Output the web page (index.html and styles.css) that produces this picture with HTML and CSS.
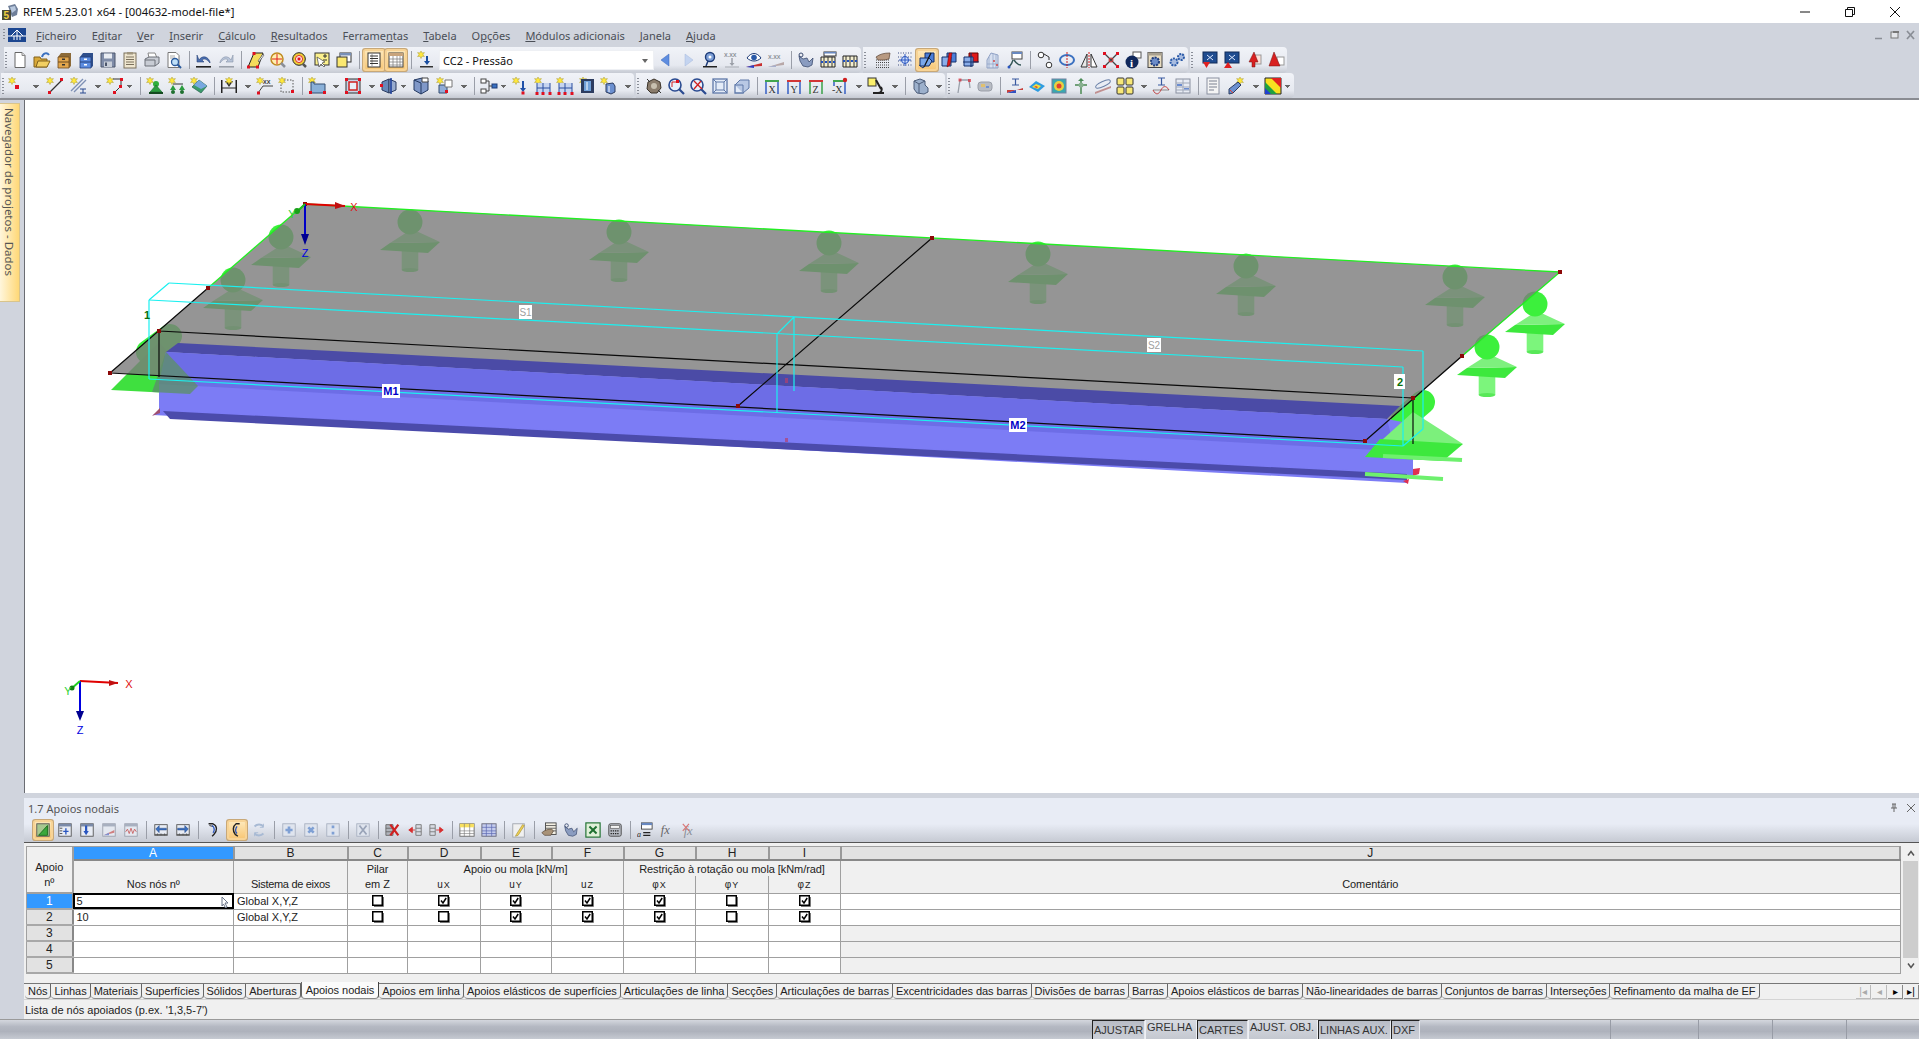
FILE: index.html
```html
<!DOCTYPE html>
<html lang="pt">

<head>
  <meta charset="UTF-8">
  <title>RFEM 5.23.01 x64 - [004632-model-file*]</title>
  <link rel="stylesheet" href="styles.css">
</head>

<body>
  <!-- icon sheet -->
  <svg class="defs">
    <defs>
      <g id="st"><path d="M4 0l1 2 2.400-.4L6 3.600l1.400 2L5 5.200 4 7.500l-1-2.300-2.400.4L2 3.600.6 1.600 3 2z" fill="#ffe83c" stroke="#a89a30" stroke-width=".5"/></g>
      <g id="rd"><rect width="3" height="3" fill="#e01020"/></g>
    </defs>
    <symbol id="new" viewBox="0 0 18 18"><path d="M4 1.500h7l3 3v12H4z" fill="#fff" stroke="#666"/><path d="M11 1.500v3h3" fill="#ddd" stroke="#888"/></symbol>
    <symbol id="open" viewBox="0 0 18 18"><path d="M1 6h6l1 2h6v8H1z" fill="#d8a838" stroke="#80601c"/><path d="M3 16l2-6h12l-3 6z" fill="#f2cf62" stroke="#80601c"/><path d="M9 6c1-4 5-5 7-2" fill="none" stroke="#3a70c0" stroke-width="2"/></symbol>
    <symbol id="arco" viewBox="0 0 18 18"><path d="M6 2h10v13l-2 2H3V6z" fill="#8c6a38"/><path d="M3 6h11v11H3z" fill="#e2a64c" stroke="#6c4a1e" stroke-width=".8"/><path d="M3 11h11" stroke="#6c4a1e"/><rect x="7" y="7.500" width="3" height="1.500" fill="#333"/><rect x="7" y="13" width="3" height="1.500" fill="#333"/></symbol>
    <symbol id="arcb" viewBox="0 0 18 18"><path d="M6 2h10v13l-2 2H3V6z" fill="#2f4f8c"/><path d="M3 6h11v11H3z" fill="#5c8ce0" stroke="#23407c" stroke-width=".8"/><path d="M3 11h11" stroke="#23407c"/><rect x="7" y="7.500" width="3" height="1.500" fill="#fff"/><rect x="7" y="13" width="3" height="1.500" fill="#fff"/></symbol>
    <symbol id="save" viewBox="0 0 18 18"><path d="M2 2h14v14H2z" fill="#7f8ca8" stroke="#4c566c"/><rect x="5" y="2.500" width="8" height="5" fill="#e8ecf2"/><rect x="5" y="10.500" width="8" height="5.500" fill="#c8ced8"/><rect x="6" y="11.500" width="2" height="3.500" fill="#4c566c"/></symbol>
    <symbol id="note" viewBox="0 0 18 18"><rect x="3" y="2" width="12" height="15" fill="#efe6cf" stroke="#7a705c"/><path d="M5 6h8M5 8.500h8M5 11h8M5 13.500h8" stroke="#7a705c"/><rect x="6" y="1" width="6" height="2.500" fill="#a09680"/></symbol>
    <symbol id="print" viewBox="0 0 18 18"><path d="M5 2h7l2 5H6z" fill="#fff" stroke="#888"/><path d="M2 8l4-2h10v6l-4 3H2z" fill="#c8ccd4" stroke="#6c7078"/><path d="M2 9h10v6" fill="none" stroke="#6c7078"/></symbol>
    <symbol id="prev" viewBox="0 0 18 18"><path d="M3 1.500h8l3 3v12H3z" fill="#fff" stroke="#777"/><path d="M5 5h5M5 7h5" stroke="#aaa"/><circle cx="10" cy="11" r="3.500" fill="#bfe0f8" stroke="#2a5a9c" stroke-width="1.300"/><path d="M12.500 13.500l3.500 3.500" stroke="#2a5a9c" stroke-width="2"/></symbol>
    <symbol id="undo" viewBox="0 0 18 18"><path d="M4 9c3-5 9-4 11 2v1c-3-4-6-5-8-3l2 2H2V4z" fill="#4a6eb0" stroke="#2a4478" stroke-width=".6"/><rect x="1" y="15" width="15" height="1.600" fill="#222"/></symbol>
    <symbol id="redo" viewBox="0 0 18 18"><path d="M14 9c-3-5-9-4-11 2v1c3-4 6-5 8-3l-2 2h7V4z" fill="#b8c4d8" stroke="#8894aa" stroke-width=".6"/><rect x="2" y="15" width="15" height="1.600" fill="#9aa0aa"/></symbol>
    <symbol id="para" viewBox="0 0 18 18"><path d="M7 2h9l-5 14H1z" fill="#f4dc5c" stroke="#222"/><use href="#rd" x="5.500" y="1"/><use href="#rd" y="14.500"/><use href="#rd" x="9" y="14.500"/><path d="M11 10l5-7 1 1-5 7z" fill="#fff" stroke="#333" stroke-width=".6"/></symbol>
    <symbol id="lens1" viewBox="0 0 18 18"><circle cx="8" cy="8" r="6" fill="#fff0b0" stroke="#c08a20" stroke-width="1.500"/><path d="M8 3v10M3 8h10" stroke="#e02020"/><path d="M12 12l4 4" stroke="#8a8f98" stroke-width="2.500"/></symbol>
    <symbol id="lens2" viewBox="0 0 18 18"><circle cx="8" cy="8" r="6.300" fill="#f0d038" stroke="#222"/><circle cx="8" cy="8" r="3.500" fill="#fff" stroke="#e02020"/><use href="#rd" x="6.500" y="6.500"/><path d="M12 13l3 3" stroke="#555" stroke-width="2.500"/></symbol>
    <symbol id="winc" viewBox="0 0 18 18"><rect x="2" y="2" width="14" height="12" fill="#fbf08c" stroke="#333"/><path d="M10 5h4M12 3v4M10 9h4" stroke="#333"/><path d="M4 6l2 10 2-3 3 3 1-1-3-3 3-1z" fill="#fff" stroke="#444" stroke-width=".7"/></symbol>
    <symbol id="winy" viewBox="0 0 18 18"><rect x="5" y="2" width="11" height="9" fill="#fff" stroke="#333"/><rect x="5" y="2" width="11" height="2.500" fill="#7890b8"/><rect x="2" y="6" width="10" height="10" fill="#fbe870" stroke="#333"/></symbol>
    <symbol id="tb1" viewBox="0 0 18 18"><rect x="3" y="2" width="12" height="14" fill="#fff" stroke="#333"/><path d="M5 5h8M5 7.500h8M5 10h8M5 12.500h8" stroke="#333"/><path d="M7 3v12" stroke="#333" stroke-width=".5"/></symbol>
    <symbol id="tb2" viewBox="0 0 18 18"><rect x="2" y="2" width="14" height="14" fill="#fff" stroke="#444"/><rect x="2" y="2" width="14" height="3" fill="#c8a47c"/><path d="M2 8h14M2 11h14M2 14h14M6 5v11M10 5v11M13 5v11" stroke="#777" stroke-width=".7"/></symbol>
    <symbol id="loadc" viewBox="0 0 18 18"><use href="#st"/><path d="M10 5v7" stroke="#1a4ea0" stroke-width="2"/><path d="M7 10h6l-3 4z" fill="#1a4ea0"/><rect x="3" y="15" width="13" height="1.500" fill="#333"/></symbol>
    <symbol id="left" viewBox="0 0 18 18"><path d="M12 3v12L4 9z" fill="#5e8de0" stroke="#3a66b8" stroke-width=".5"/></symbol>
    <symbol id="right" viewBox="0 0 18 18"><path d="M6 3v12l8-6z" fill="#c4d4f0" stroke="#a4b8dc" stroke-width=".5"/></symbol>
    <symbol id="viewp" viewBox="0 0 18 18"><circle cx="9" cy="6" r="4.500" fill="#7ea0d8" stroke="#1e3c78" stroke-width="1.400"/><circle cx="9" cy="6" r="1.500" fill="#fff"/><path d="M7 10l-2 5" stroke="#1e3c78" stroke-width="1.500"/><rect x="2" y="15" width="14" height="1.500" fill="#222"/></symbol>
    <symbol id="xxd" viewBox="0 0 18 18"><text x="1" y="6" class="ict" fill="#8a8e96">X.XX</text><path d="M9 7v7" stroke="#9ca0a8" stroke-width="1.500"/><path d="M6.500 12h5L9 15z" fill="#9ca0a8"/><rect x="2" y="15.500" width="14" height="1" fill="#a8acb4"/></symbol>
    <symbol id="eye" viewBox="0 0 18 18"><path d="M2 7c4-6 10-6 14 0-4 4-10 4-14 0z" fill="#fff" stroke="#1e3c78"/><circle cx="9" cy="6.500" r="2.800" fill="#2a5aa8"/><path d="M1 16l16-4v3z" fill="#c83030"/><path d="M1 16l8-2v3z" fill="#3040c0"/></symbol>
    <symbol id="xxg" viewBox="0 0 18 18"><text x="1" y="8" class="ict" fill="#8a8e96">X.XX</text><path d="M1 16l16-5v3z" fill="#b8a8a8"/><path d="M1 16l8-2v2z" fill="#a8b0cc"/></symbol>
    <symbol id="wren" viewBox="0 0 18 18"><path d="M2 5l4 3 4-1 2 4 4-4-1 7-4 2-5-1-3-5z" fill="#8a9cc0" stroke="#3c4c70" stroke-width=".8"/><circle cx="4" cy="4" r="2" fill="none" stroke="#3c4c70"/></symbol>
    <symbol id="aba1" viewBox="0 0 18 18"><rect x="5" y="1" width="12" height="4" fill="#fff" stroke="#333"/><rect x="5" y="1" width="12" height="1.500" fill="#6888c0"/><path d="M2 6h14v10H2z" fill="#f4efd0" stroke="#222"/><path d="M5 6v10M9 6v10M13 6v10" stroke="#333"/><path d="M2 11h14" stroke="#2050c0" stroke-width="2" stroke-dasharray="2 2"/></symbol>
    <symbol id="aba2" viewBox="0 0 18 18"><path d="M2 5h14v11H2z" fill="#f4efd0" stroke="#222"/><path d="M5 5v11M9 5v11M13 5v11" stroke="#333"/><path d="M2 10h14" stroke="#2050c0" stroke-width="2" stroke-dasharray="2 2"/></symbol>
    <symbol id="hand" viewBox="0 0 18 18"><path d="M2 9h14M2 11.500h14M2 14h14M2 16.500h14" stroke="#444" stroke-dasharray="1 1"/><path d="M2 6c4-3 8-4 14-4l-1 6-5 1H4z" fill="#b89a82" stroke="#5a4434" stroke-width=".7"/></symbol>
    <symbol id="gstar" viewBox="0 0 18 18"><path d="M2 2h14M2 6h14M2 10h14M2 14h14" stroke="#3c4c80" stroke-dasharray="1 1.500"/><circle cx="9" cy="9" r="3.500" fill="#cfe0ff" stroke="#2a56c0"/><path d="M9 3v12M3 9h12" stroke="#2a56c0"/></symbol>
    <symbol id="cub" viewBox="0 0 18 18"><path d="M7 2h9v9H7z" fill="#4c7ed8" stroke="#14306c"/><path d="M2 7h9l3 3-3 5H2z" fill="#7aa8ec" stroke="#14306c"/><path d="M13 2l-7 14" stroke="#111" stroke-width="1.200"/><path d="M1 14l4 3 2-3" fill="none" stroke="#1b3c80"/></symbol>
    <symbol id="cubr" viewBox="0 0 18 18"><path d="M7 2h9v9H7z" fill="#4c7ed8" stroke="#14306c"/><path d="M2 6h9v9H2z" fill="#8aaeea" stroke="#14306c"/><path d="M9 2l-2 14 3-2 2-12z" fill="#e01818" stroke="#600" stroke-width=".5"/></symbol>
    <symbol id="cubr2" viewBox="0 0 18 18"><path d="M7 2h9v9H7z" fill="#e01818" stroke="#600"/><path d="M2 6h9v9H2z" fill="#8aaeea" stroke="#14306c"/><path d="M9 2v14" stroke="#14306c" stroke-width="1.200"/><path d="M1 11h16" stroke="#14306c"/></symbol>
    <symbol id="fgrid" viewBox="0 0 18 18"><path d="M7 2l7 2v13H3V9z" fill="#d8e0f0" stroke="#8ea0c4"/><path d="M3 13h11M5 6v11M9 3v14M12 4v13" stroke="#8ea0c4" stroke-width=".7"/><circle cx="10" cy="10" r="1" fill="#d04848"/><circle cx="13" cy="14" r="1" fill="#d04848"/></symbol>
    <symbol id="bran" viewBox="0 0 18 18"><rect x="6" y="1" width="10" height="7" fill="#fff" stroke="#444"/><rect x="6" y="1" width="10" height="2" fill="#6888c0"/><path d="M7 9c-1 4-2 5-4 7M8 9c2 3 4 5 7 5" fill="none" stroke="#355" stroke-width="1.400"/><circle cx="3" cy="16" r="1.500" fill="#2a56c0"/></symbol>
    <symbol id="chain" viewBox="0 0 18 18"><circle cx="5" cy="4" r="2.800" fill="#fff" stroke="#333"/><circle cx="13" cy="14" r="2.800" fill="#fff" stroke="#333"/><path d="M8 3l5 3v3" fill="none" stroke="#333"/></symbol>
    <symbol id="cdash" viewBox="0 0 18 18"><ellipse cx="9" cy="9" rx="7" ry="5" fill="none" stroke="#3a70c0" stroke-width="2"/><path d="M9 1v16" stroke="#d02020" stroke-dasharray="2 1"/></symbol>
    <symbol id="mirr" viewBox="0 0 18 18"><path d="M7 3v13H1z" fill="#e8e8e8" stroke="#333"/><path d="M11 3v13h6z" fill="#fff" stroke="#333"/><path d="M9 1v16" stroke="#d02020" stroke-dasharray="2 1"/></symbol>
    <symbol id="xred" viewBox="0 0 18 18"><path d="M3 3l12 12M15 3L3 15" stroke="#444" stroke-width="1.300"/><use href="#rd" x="1" y="1"/><use href="#rd" x="14" y="1"/><use href="#rd" x="1" y="14"/><use href="#rd" x="14" y="14"/><circle cx="9" cy="9" r="2" fill="none" stroke="#d02020"/></symbol>
    <symbol id="info" viewBox="0 0 18 18"><rect x="9" y="1" width="8" height="6" fill="#fff" stroke="#555"/><circle cx="8" cy="11" r="6.500" fill="#10285c"/><text x="6" y="15.500" class="ici" fill="#fff">i</text></symbol>
    <symbol id="gwin" viewBox="0 0 18 18"><rect x="2" y="1.500" width="14" height="15" fill="#e8dcc0" stroke="#444"/><rect x="2" y="1.500" width="14" height="3" fill="#a8a090"/><circle cx="9" cy="10.500" r="4" fill="#6c8cc8" stroke="#1f3c7c" stroke-width="2" stroke-dasharray="2 1"/></symbol>
    <symbol id="gear" viewBox="0 0 18 18"><circle cx="6" cy="11" r="3.500" fill="#a8bce0" stroke="#2a5aa8" stroke-width="2" stroke-dasharray="2 1"/><circle cx="13" cy="6" r="3" fill="#a8bce0" stroke="#2a5aa8" stroke-width="2" stroke-dasharray="2 1"/></symbol>
    <symbol id="shdn" viewBox="0 0 18 18"><rect x="2" y="1" width="14" height="11" fill="#1f4c90" stroke="#102a58"/><path d="M6 4l6 5M12 4L6 9" stroke="#dde8ff"/><path d="M2 11h7l-3.500 6z" fill="#e02020"/></symbol>
    <symbol id="shup" viewBox="0 0 18 18"><rect x="2" y="1" width="14" height="11" fill="#1f4c90" stroke="#102a58"/><path d="M6 4l6 5M12 4L6 9" stroke="#dde8ff"/><path d="M1 17h8L5 11z" fill="#e02020"/></symbol>
    <symbol id="rarr" viewBox="0 0 18 18"><rect x="9" y="4" width="7" height="9" fill="#fde0d8" stroke="#999"/><path d="M9 1l-5 10h3v5h3v-5h3z" fill="#d82020" stroke="#701010" stroke-width=".5"/></symbol>
    <symbol id="rarr2" viewBox="0 0 18 18"><rect x="10" y="6" width="7" height="8" fill="#fff" stroke="#999"/><path d="M7 1L2 15h11z" fill="#d82020" stroke="#701010" stroke-width=".5"/></symbol>
    <symbol id="pt" viewBox="0 0 18 18"><use href="#st"/><rect x="7" y="8" width="4" height="4" fill="#e01020"/></symbol>
    <symbol id="line" viewBox="0 0 18 18"><use href="#st"/><path d="M16 3L4 15" stroke="#333" stroke-width="1.300"/><use href="#rd" x="14" y="1"/><use href="#rd" x="2" y="14"/></symbol>
    <symbol id="bari" viewBox="0 0 18 18"><use href="#st"/><path d="M13 2L1 14M16 3L4 15" stroke="#7e90b4" stroke-width="1.400"/><path d="M10 12h6M13 12v4M10 16h6" stroke="#2a4a90"/></symbol>
    <symbol id="poly" viewBox="0 0 18 18"><use href="#st"/><path d="M7 2h8v7l-7 7" fill="none" stroke="#333"/><use href="#rd" x="14" y="1"/><use href="#rd" x="13" y="8"/><use href="#rd" x="7" y="14"/></symbol>
    <symbol id="supg" viewBox="0 0 18 18"><use href="#st"/><circle cx="10" cy="7" r="3" fill="#2fae3c"/><path d="M10 8l6 7H4z" fill="#2c9c40" stroke="#14602a" stroke-width=".5"/><rect x="3" y="15" width="14" height="2" fill="#144a20"/></symbol>
    <symbol id="sup2" viewBox="0 0 18 18"><use href="#st"/><path d="M5 7h10" stroke="#333"/><path d="M5 8l3 5H2zM14 8l3 5h-6z" fill="#2c9c40"/><circle cx="5" cy="15" r="2" fill="#1e7030"/><circle cx="14" cy="15" r="2" fill="#1e7030"/></symbol>
    <symbol id="surg" viewBox="0 0 18 18"><use href="#st"/><path d="M9 3l8 6-6 7-9-6z" fill="#3c9c6c" stroke="#14503c" stroke-width=".6"/><path d="M9 3l8 6-6 3-7-4z" fill="#78a8e0"/></symbol>
    <symbol id="dimx" viewBox="0 0 18 18"><rect x="1" y="3" width="1.500" height="13" fill="#222"/><rect x="15.500" y="3" width="1.500" height="13" fill="#222"/><path d="M2 11h14" stroke="#222"/><path d="M5 4h8L9 10z" fill="#333"/><use href="#st" x="5"/></symbol>
    <symbol id="xxl" viewBox="0 0 18 18"><use href="#st"/><text x="7" y="7" class="ict" fill="#333">XX</text><path d="M2 16l5-7h10" fill="none" stroke="#444"/><use href="#rd" x="1" y="14.500"/></symbol>
    <symbol id="dash" viewBox="0 0 18 18"><rect x="3" y="3" width="12" height="12" fill="none" stroke="#555" stroke-dasharray="1.500 1.500"/><use href="#st"/><use href="#rd" x="13" y="13"/></symbol>
    <symbol id="rblu" viewBox="0 0 18 18"><use href="#st"/><path d="M3 5h3v2h11v9H3z" fill="#8ab0d8" stroke="#334c70"/><use href="#rd" x="1" y="14"/><use href="#rd" x="15" y="14"/></symbol>
    <symbol id="rred" viewBox="0 0 18 18"><rect x="2" y="2" width="14" height="14" fill="#c8d4e8" stroke="#333"/><rect x="5" y="5" width="8" height="8" fill="#e8eef8" stroke="#d02020" stroke-width="1.500"/><use href="#rd" x="1" y="1"/><use href="#rd" x="14" y="14"/><use href="#rd" x="14" y="1"/><use href="#rd" x="1" y="14"/></symbol>
    <symbol id="cuar" viewBox="0 0 18 18"><path d="M2 5l7-3v14l-7-3z" fill="#6888b8" stroke="#2c3c60"/><path d="M9 2l7 3v8l-7 3z" fill="#98acd0" stroke="#2c3c60"/><path d="M11 1v16" stroke="#1a3c98" stroke-width="1.500"/><use href="#rd" x="0" y="7"/></symbol>
    <symbol id="cubl" viewBox="0 0 18 18"><path d="M2 3l8-2 6 3v9l-7 4-7-4z" fill="#8098c8" stroke="#223860"/><path d="M10 1h6v4h-6z" fill="#fff" stroke="#444"/><path d="M2 3l7 3v11" fill="none" stroke="#223860"/></symbol>
    <symbol id="cubs" viewBox="0 0 18 18"><use href="#st"/><path d="M3 8h8v8H3z" fill="#90acd8" stroke="#334c70"/><path d="M9 3h7v7H9z" fill="#fff" stroke="#777"/><use href="#rd" x="9" y="13"/></symbol>
    <symbol id="flow" viewBox="0 0 18 18"><rect x="1" y="2" width="5" height="4" fill="#fff" stroke="#444"/><rect x="1" y="12" width="5" height="4" fill="#fff" stroke="#444"/><rect x="12" y="7" width="5" height="4" fill="#3a70c0" stroke="#1e3c78"/><path d="M6 4h3v5h3M6 14h3V9" fill="none" stroke="#444"/></symbol>
    <symbol id="dred" viewBox="0 0 18 18"><use href="#st"/><path d="M11 4v8" stroke="#2050a8" stroke-width="2"/><path d="M8 11h6l-3 4z" fill="#2050a8"/><use href="#rd" x="9.500" y="14.500"/></symbol>
    <symbol id="frm" viewBox="0 0 18 18"><use href="#st"/><path d="M3 6h13v11H3z" fill="#c6d4f0"/><path d="M3 11h13M3 6v11M9 6v11M16 6v11" stroke="#2a4ea0"/><use href="#rd" x="1.500" y="15"/><use href="#rd" x="7.500" y="15"/><use href="#rd" x="14.500" y="15"/></symbol>
    <symbol id="film" viewBox="0 0 18 18"><use href="#st" x="1"/><rect x="3" y="2" width="13" height="14" fill="#2c3c60"/><rect x="6" y="4" width="7" height="10" fill="#70a0d8"/><path d="M9 5v8" stroke="#fff"/></symbol>
    <symbol id="bhand" viewBox="0 0 18 18"><use href="#st"/><path d="M6 7l7-1 2 3v6l-4 2-5-2z" fill="#6c90d0" stroke="#2c3c60"/><path d="M9 9v6" stroke="#fff"/></symbol>
    <symbol id="gskel" viewBox="0 0 18 18"><path d="M3 5l6-3 6 3 1 6-4 5H6l-4-4z" fill="#8a7c6c" stroke="#3a3228"/><circle cx="9" cy="9" r="3" fill="#c8c0b0"/><path d="M2 2l3 3M16 16l-3-3" stroke="#333"/></symbol>
    <symbol id="zred" viewBox="0 0 18 18"><circle cx="8" cy="8" r="6" fill="#e8f0fc" stroke="#2a4a90" stroke-width="1.600"/><path d="M12 12l5 5" stroke="#2a4a90" stroke-width="2.200"/><path d="M5 10V5h5" fill="none" stroke="#d02020"/><use href="#rd" x="9" y="3"/></symbol>
    <symbol id="zx" viewBox="0 0 18 18"><circle cx="8" cy="8" r="6" fill="#e8f0fc" stroke="#2a4a90" stroke-width="1.600"/><path d="M12 12l5 5" stroke="#2a4a90" stroke-width="2.200"/><path d="M5 4l8 8M12 4l-7 8" stroke="#d02020" stroke-width="1.300"/></symbol>
    <symbol id="wire" viewBox="0 0 18 18"><rect x="2" y="2" width="14" height="14" fill="#e4ecf8" stroke="#5e78a8" stroke-width="1.300"/><rect x="5" y="5" width="8" height="8" fill="none" stroke="#5e78a8"/><path d="M2 2l3 3M16 2l-3 3M2 16l3-3M16 16l-3-3" stroke="#5e78a8"/></symbol>
    <symbol id="wcub" viewBox="0 0 18 18"><path d="M2 8h8v8H2z" fill="#e4ecf8" stroke="#5e78a8" stroke-width="1.300"/><path d="M2 8l5-5h9v8l-6 5" fill="#b8c8e4" stroke="#5e78a8"/><path d="M2 8h8v8" fill="none" stroke="#5e78a8"/></symbol>
    <symbol id="axx" viewBox="0 0 18 18"><path d="M2 4h14" stroke="#2e9c3c" stroke-width="1.800"/><path d="M3 5v12M15 5v12" stroke="#2a56c0" stroke-width="1.400"/><text x="5.500" y="16" class="ics" fill="#333">X</text></symbol>
    <symbol id="axy" viewBox="0 0 18 18"><path d="M2 4h14" stroke="#d02020" stroke-width="1.800"/><path d="M3 5v12M15 5v12" stroke="#2a56c0" stroke-width="1.400"/><text x="5.500" y="16" class="ics" fill="#333">Y</text></symbol>
    <symbol id="axz" viewBox="0 0 18 18"><path d="M2 4h14" stroke="#d02020" stroke-width="1.800"/><path d="M3 5v12M15 5v12" stroke="#2e9c3c" stroke-width="1.400"/><text x="5.500" y="16" class="ics" fill="#333">Z</text></symbol>
    <symbol id="axm" viewBox="0 0 18 18"><path d="M2 4h12" stroke="#2e9c3c" stroke-width="1.800"/><path d="M14 5v12M3 5v4" stroke="#2a56c0" stroke-width="1.400"/><text x="1" y="16" class="ics" fill="#333">-X</text><circle cx="14" cy="3" r="2.200" fill="#d02020"/></symbol>
    <symbol id="micr" viewBox="0 0 18 18"><rect x="1" y="1" width="8" height="8" fill="#fbf06c" stroke="#333"/><path d="M9 3l5 9M6 16h11M11 16c3 0 5-3 3-6" fill="none" stroke="#222" stroke-width="2"/></symbol>
    <symbol id="shap" viewBox="0 0 18 18"><path d="M3 4l6-2 5 2v4l3 3v4l-4 2-7-1-3-4z" fill="#9cb0cc" stroke="#4c5c78"/><path d="M3 4l5 3v9M8 7l6-3" fill="none" stroke="#4c5c78"/></symbol>
    <symbol id="pf" viewBox="0 0 18 18"><path d="M4 16L6 3h9l1 8" fill="none" stroke="#9aa0aa" stroke-width="1.300"/><use href="#rd" x="4.500" y="1.500" opacity=".6"/><use href="#rd" x="14" y="2" opacity=".6"/></symbol>
    <symbol id="chip" viewBox="0 0 18 18"><rect x="2" y="5" width="14" height="9" rx="3" fill="#b8bcc4" stroke="#9a9ea8"/><rect x="5" y="7" width="4" height="3" fill="#e0c070"/><rect x="10" y="9" width="3" height="2" fill="#7090d0"/></symbol>
    <symbol id="bgr" viewBox="0 0 18 18"><path d="M6 2h7M9.500 2v6M6 8h7" stroke="#3a5aa0" stroke-width="1.200"/><path d="M1 16l16-5v2H1z" fill="#c8403c"/><path d="M1 16l9-3v3z" fill="#3050c0"/></symbol>
    <symbol id="heat" viewBox="0 0 18 18"><path d="M1 10l7-6 9 5-7 6z" fill="#2e9ce0"/><path d="M4 10l4-3 5 2-3 3z" fill="#f0e040"/><path d="M6 10l2-1 2 1-1 1z" fill="#e04030"/></symbol>
    <symbol id="chea" viewBox="0 0 18 18"><rect x="2" y="2" width="14" height="14" fill="#3aa8b0" stroke="#7080a0"/><circle cx="9" cy="9" r="5" fill="#e8d040"/><circle cx="9" cy="9" r="2.500" fill="#e04030"/></symbol>
    <symbol id="arws" viewBox="0 0 18 18"><path d="M9 2v7M3 8h12M9 9v8" stroke="#70a078" stroke-width="2"/><path d="M6 4l3-3 3 3z" fill="#4c8c58"/><circle cx="9" cy="8" r="2.500" fill="#88b090"/></symbol>
    <symbol id="elli" viewBox="0 0 18 18"><path d="M1 15l16-6v2L1 17z" fill="#c09090"/><ellipse cx="9" cy="7" rx="8" ry="2.500" transform="rotate(-25 9 7)" fill="#e8ecf4" stroke="#6a80a8"/></symbol>
    <symbol id="sq4" viewBox="0 0 18 18"><rect x="1" y="1" width="7" height="7" rx="1" fill="#f8e878" stroke="#333"/><rect x="10" y="1" width="7" height="7" rx="1" fill="#f8e878" stroke="#333"/><rect x="1" y="10" width="7" height="7" rx="1" fill="#f8e878" stroke="#333"/><rect x="10" y="10" width="7" height="7" rx="1" fill="#f8e878" stroke="#333"/></symbol>
    <symbol id="bcur" viewBox="0 0 18 18"><path d="M6 1h7M9.500 1v7M6 8h7" stroke="#3a5aa0" stroke-width="1.200"/><path d="M1 13h16" stroke="#888"/><path d="M1 13c3 6 6 4 8 0s5-5 8 0" fill="none" stroke="#c04040"/></symbol>
    <symbol id="tgrd" viewBox="0 0 18 18"><rect x="2" y="2" width="14" height="14" fill="#e8ecf4" stroke="#8a90a0"/><path d="M2 6h14M2 10h14M2 13h14M9 2v14" stroke="#a0a8b8"/><rect x="3" y="7" width="5" height="2" fill="#6a8cd0"/><rect x="10" y="11" width="5" height="1.500" fill="#6a8cd0"/></symbol>
    <symbol id="repo" viewBox="0 0 18 18"><rect x="3" y="1" width="12" height="16" fill="#f4f4f4" stroke="#8a90a0"/><path d="M5 4h8M5 7h8M5 10h8M5 13h5" stroke="#7a8090"/></symbol>
    <symbol id="penw" viewBox="0 0 18 18"><use href="#st" x="8"/><path d="M1 12l9-7 3 3-8 8-4 1z" fill="#6c90d0" stroke="#2c3c60"/><path d="M2 13l3 3" stroke="#e04030"/></symbol>
    <symbol id="rain" viewBox="0 0 18 18"><path d="M1 1h16v16H1z" fill="#f8e020" stroke="#222"/><path d="M1 17V5l12 12z" fill="#20a040"/><path d="M1 17v-6l6 6z" fill="#2040d0"/><path d="M7 1h10v10z" fill="#e02020"/></symbol>
    <symbol id="ttri" viewBox="0 0 18 18"><rect x="2" y="2" width="14" height="14" fill="#a8c890" stroke="#555"/><path d="M4 15L14 4v11z" fill="#3ca83c" stroke="#1c6c1c"/></symbol>
    <symbol id="tpl" viewBox="0 0 18 18"><rect x="2" y="2" width="14" height="14" fill="#e8ecf4" stroke="#555"/><rect x="2" y="2" width="14" height="3" fill="#7a8aa8"/><path d="M10 7v7M7 10.500h6" stroke="#2a56c0" stroke-width="1.500"/><path d="M3 7h3M3 10h3M3 13h3" stroke="#444"/></symbol>
    <symbol id="tdn" viewBox="0 0 18 18"><rect x="2" y="2" width="14" height="14" fill="#e8ecf4" stroke="#555"/><rect x="2" y="2" width="14" height="3" fill="#7a8aa8"/><path d="M8 4v7" stroke="#2a56c0" stroke-width="2.500"/><path d="M5 10h6l-3 5z" fill="#2a56c0"/></symbol>
    <symbol id="tch" viewBox="0 0 18 18"><rect x="2" y="2" width="14" height="14" fill="#e4e8f0" stroke="#9aa0ac"/><rect x="2" y="2" width="14" height="3" fill="#a8b0c0"/><path d="M3 15l12-6v3z" fill="#d08080"/><path d="M3 15l6-3v3z" fill="#8090d0"/></symbol>
    <symbol id="twav" viewBox="0 0 18 18"><rect x="2" y="2" width="14" height="14" fill="#e4e8f0" stroke="#9aa0ac"/><rect x="2" y="2" width="14" height="3" fill="#a8b0c0"/><path d="M3 11l2-3 2 5 2-6 2 6 2-5 2 3" fill="none" stroke="#c86060"/></symbol>
    <symbol id="tl" viewBox="0 0 18 18"><rect x="2" y="3" width="14" height="12" fill="#e8ecf4" stroke="#555"/><path d="M2 14h14M5 13v2M9 13v2M13 13v2" stroke="#555"/><path d="M15 7H7V4L3 8l4 4V9h8z" fill="#3a70c0" stroke="#1e3c78" stroke-width=".5"/></symbol>
    <symbol id="tr" viewBox="0 0 18 18"><rect x="2" y="3" width="14" height="12" fill="#e8ecf4" stroke="#555"/><path d="M2 14h14M5 13v2M9 13v2M13 13v2" stroke="#555"/><path d="M3 7h8V4l4 4-4 4V9H3z" fill="#3a70c0" stroke="#1e3c78" stroke-width=".5"/></symbol>
    <symbol id="cu1" viewBox="0 0 18 18"><path d="M4 2h5c5 2 5 8 1 12l-2 2" fill="none" stroke="#222" stroke-width="1.500"/><path d="M5 4l4 1" stroke="#222"/><path d="M8 4c3 2 3 6 1 8" fill="none" stroke="#2a56c0" stroke-width="1.500"/></symbol>
    <symbol id="cu2" viewBox="0 0 18 18"><path d="M12 2H8C4 5 4 10 7 14l3 2" fill="none" stroke="#222" stroke-width="1.600"/><path d="M9 5C7 8 7 11 9 13" fill="none" stroke="#2a56c0" stroke-width="1.500"/></symbol>
    <symbol id="circ" viewBox="0 0 18 18"><path d="M4 5a7 7 0 0 1 10 0M14 13a7 7 0 0 1-10 0" fill="none" stroke="#a8bad4" stroke-width="2.200"/><path d="M14 2v4h-4M4 16v-4h4" fill="none" stroke="#a8bad4"/></symbol>
    <symbol id="ppl" viewBox="0 0 18 18"><rect x="2" y="2" width="14" height="14" fill="#dfe4ee" stroke="#a8b0c0"/><path d="M9 5v8M5 9h8" stroke="#7fa0d4" stroke-width="3"/></symbol>
    <symbol id="pxx" viewBox="0 0 18 18"><rect x="2" y="2" width="14" height="14" fill="#dfe4ee" stroke="#a8b0c0"/><path d="M6 6l6 6M12 6l-6 6" stroke="#7fa0d4" stroke-width="3"/></symbol>
    <symbol id="pdo" viewBox="0 0 18 18"><rect x="2" y="2" width="14" height="14" fill="#dfe4ee" stroke="#a8b0c0"/><path d="M9 4v3M9 11v3" stroke="#7fa0d4" stroke-width="3"/></symbol>
    <symbol id="pxg" viewBox="0 0 18 18"><rect x="2" y="2" width="14" height="14" fill="#dfe4ee" stroke="#a8b0c0"/><path d="M5 4l8 10M13 4L5 14" stroke="#9aa4b8" stroke-width="2"/></symbol>
    <symbol id="rowx" viewBox="0 0 18 18"><path d="M1 3h8v12H1z" fill="#b0b4bc" stroke="#666"/><path d="M1 7h8M1 11h8" stroke="#666"/><path d="M6 3l9 12M15 3L6 15" stroke="#d02020" stroke-width="2.500"/></symbol>
    <symbol id="rowl" viewBox="0 0 18 18"><path d="M10 3h6v12h-6z" fill="#d8dce4" stroke="#777"/><path d="M10 7h6M10 11h6" stroke="#777"/><path d="M9 9H3M6 6L2 9l4 3z" fill="#d83030" stroke="#d83030"/></symbol>
    <symbol id="rowr" viewBox="0 0 18 18"><path d="M1 3h6v12H1z" fill="#d8dce4" stroke="#777"/><path d="M1 7h6M1 11h6" stroke="#777"/><path d="M8 9h6M12 6l4 3-4 3z" fill="#d83030" stroke="#d83030"/></symbol>
    <symbol id="tyel" viewBox="0 0 18 18"><rect x="1" y="2" width="16" height="14" fill="#fff" stroke="#666"/><rect x="1" y="2" width="16" height="4" fill="#f8e060"/><path d="M1 10h16M1 13h16M6 2v14M12 2v14" stroke="#777" stroke-width=".7"/></symbol>
    <symbol id="tblu" viewBox="0 0 18 18"><rect x="1" y="2" width="16" height="14" fill="#c4ccee" stroke="#667"/><path d="M1 6h16M1 10h16M1 13h16M6 2v14M12 2v14" stroke="#5a68b0" stroke-width=".8"/></symbol>
    <symbol id="tpen" viewBox="0 0 18 18"><rect x="2" y="2" width="13" height="15" fill="#f0f0f0" stroke="#a0a4ac"/><path d="M6 14l7-11 2 1-7 11-3 1z" fill="#f0d050" stroke="#a08c30" stroke-width=".7"/></symbol>
    <symbol id="htab" viewBox="0 0 18 18"><rect x="5" y="1" width="12" height="13" fill="#f4f0e4" stroke="#444"/><path d="M5 4h12M5 7h12M5 10h12" stroke="#555"/><path d="M1 12c3-3 7-4 11-4l2 2-3 5H4z" fill="#a89278" stroke="#4c3c2c" stroke-width=".7"/></symbol>
    <symbol id="xls" viewBox="0 0 18 18"><rect x="1" y="1" width="16" height="16" fill="#dff0d8" stroke="#1e7030" stroke-width="1.300"/><path d="M5 5l8 8M13 5l-8 8" stroke="#1e7030" stroke-width="2.200"/></symbol>
    <symbol id="calc" viewBox="0 0 18 18"><rect x="2" y="2" width="14" height="14" rx="2" fill="#b8bcc4" stroke="#444"/><rect x="4" y="4" width="10" height="3" fill="#f4f4f4" stroke="#444" stroke-width=".6"/><path d="M4 10h10M4 13h10" stroke="#222" stroke-width="1.400" stroke-dasharray="1.500 1"/></symbol>
    <symbol id="abe" viewBox="0 0 18 18"><rect x="5" y="1" width="12" height="7" fill="#fff" stroke="#444"/><rect x="5" y="1" width="12" height="2.500" fill="#6888c0"/><text x="0" y="17" class="ici2" fill="#222">a</text><path d="M7 12h8M7 15h8" stroke="#222" stroke-width="1.300"/></symbol>
    <symbol id="fx" viewBox="0 0 18 18"><text x="2" y="14" class="icf" fill="#666">fx</text></symbol>
    <symbol id="fxx" viewBox="0 0 18 18"><text x="3" y="15" class="icf" fill="#8a8e96">fx</text><path d="M2 2l7 8M9 2l-7 8" stroke="#d87878" stroke-width="1.300"/></symbol>
    <symbol id="ckon" viewBox="0 0 12 12"><rect x=".75" y=".75" width="9.500" height="9.500" fill="#fff" stroke="#000" stroke-width="1.500"/><path d="M11.500 2v9.500H2" fill="none" stroke="#777"/><path d="M3 5.500l2 2.500 3.200-5" fill="none" stroke="#000" stroke-width="1.500"/></symbol>
    <symbol id="ckoff" viewBox="0 0 12 12"><rect x=".75" y=".75" width="9.500" height="9.500" fill="#fff" stroke="#000" stroke-width="1.500"/><path d="M11.500 2v9.500H2" fill="none" stroke="#777"/></symbol>
  </svg>

  <header class="titlebar">
    <svg class="app-icon" viewBox="0 0 16 16">
      <path d="M6 2l7-2 3 5-1 6-5 2z" fill="#6f7f99" />
      <path d="M8 3l5-1 1 4-4 3z" fill="#b8c8de" />
      <rect x="0" y="6" width="9" height="10" fill="#4a4a38" />
      <text x="1.500" y="15" class="app-five">5</text>
    </svg>
    <span class="app-title">RFEM 5.23.01 x64 - [004632-model-file*]</span>
    <div class="win-buttons">
      <svg viewBox="0 0 10 10"><path d="M0 5h10" stroke="#111" /></svg>
      <svg viewBox="0 0 10 10"><path d="M.5 2.500h7v7h-7zM2.500 2.500v-2h7v7h-2" fill="none" stroke="#111" /></svg>
      <svg viewBox="0 0 10 10"><path d="M0 0l10 10M10 0L0 10" stroke="#111" /></svg>
    </div>
  </header>

  <nav class="menubar">
    <span class="grip small"></span>
    <svg class="menu-logo" viewBox="0 0 18 14">
      <rect width="18" height="14" fill="#1c4690" />
      <path d="M0 8h18M3 8l6-6 6 6M9 2v10M6 8v4M12 8v4" stroke="#fff" fill="none" />
    </svg>
    <div class="menu-items">
      <span><u>F</u>icheiro</span>
      <span>E<u>d</u>itar</span>
      <span><u>V</u>er</span>
      <span><u>I</u>nserir</span>
      <span><u>C</u>álculo</span>
      <span><u>R</u>esultados</span>
      <span>Ferrame<u>n</u>tas</span>
      <span><u>T</u>abela</span>
      <span>O<u>p</u>ções</span>
      <span><u>M</u>ódulos adicionais</span>
      <span><u>J</u>anela</span>
      <span><u>A</u>juda</span>
    </div>
    <div class="mdi-buttons">
      <svg viewBox="0 0 10 10"><path d="M1 8.500h7" stroke="#8a8e96" stroke-width="1.500" /></svg>
      <svg viewBox="0 0 10 10"><rect x="1" y="2" width="7" height="6" fill="#e4e6ea" stroke="#777" /><rect x="3" y="1" width="6" height="2" fill="#777" /></svg>
      <svg viewBox="0 0 10 10"><path d="M1 1l7 8M8 1L1 9" stroke="#8a8e96" stroke-width="1.700" /></svg>
    </div>
  </nav>

  <div class="tbar row1">
    <div class="group">
      <span class="grip"></span>
      <svg class="ic"><use href="#new"/></svg>
      <svg class="ic"><use href="#open"/></svg>
      <svg class="ic"><use href="#arco"/></svg>
      <svg class="ic"><use href="#arcb"/></svg>
      <svg class="ic"><use href="#save"/></svg>
      <svg class="ic"><use href="#note"/></svg>
      <svg class="ic"><use href="#print"/></svg>
      <svg class="ic"><use href="#prev"/></svg>
      <span class="sep"></span>
      <svg class="ic"><use href="#undo"/></svg>
      <svg class="ic"><use href="#redo"/></svg>
      <span class="sep"></span>
      <svg class="ic"><use href="#para"/></svg>
      <svg class="ic"><use href="#lens1"/></svg>
      <svg class="ic"><use href="#lens2"/></svg>
      <svg class="ic"><use href="#winc"/></svg>
      <svg class="ic"><use href="#winy"/></svg>
      <span class="sep"></span>
      <svg class="ic on"><use href="#tb1"/></svg>
      <svg class="ic on"><use href="#tb2"/></svg>
      <span class="sep"></span>
      <svg class="ic"><use href="#loadc"/></svg>
      <div class="combo"><span>CC2 - Pressão</span><i class="combo-arrow"></i></div>
      <svg class="ic"><use href="#left"/></svg>
      <svg class="ic"><use href="#right"/></svg>
      <svg class="ic"><use href="#viewp"/></svg>
      <svg class="ic"><use href="#xxd"/></svg>
      <svg class="ic"><use href="#eye"/></svg>
      <svg class="ic"><use href="#xxg"/></svg>
      <span class="sep"></span>
      <svg class="ic"><use href="#wren"/></svg>
      <svg class="ic"><use href="#aba1"/></svg>
      <svg class="ic"><use href="#aba2"/></svg>
    </div>
    <div class="group">
      <span class="grip"></span>
      <svg class="ic m4"><use href="#hand"/></svg>
      <svg class="ic"><use href="#gstar"/></svg>
      <svg class="ic on"><use href="#cub"/></svg>
      <svg class="ic"><use href="#cubr"/></svg>
      <svg class="ic"><use href="#cubr2"/></svg>
      <svg class="ic"><use href="#fgrid"/></svg>
      <svg class="ic"><use href="#bran"/></svg>
      <span class="sep"></span>
      <svg class="ic"><use href="#chain"/></svg>
      <svg class="ic"><use href="#cdash"/></svg>
      <svg class="ic"><use href="#mirr"/></svg>
      <svg class="ic"><use href="#xred"/></svg>
      <svg class="ic"><use href="#info"/></svg>
      <svg class="ic"><use href="#gwin"/></svg>
      <svg class="ic"><use href="#gear"/></svg>
    </div>
    <div class="group">
      <span class="grip"></span>
      <svg class="ic m4"><use href="#shdn"/></svg>
      <svg class="ic"><use href="#shup"/></svg>
      <svg class="ic"><use href="#rarr"/></svg>
      <svg class="ic"><use href="#rarr2"/></svg>
    </div>
  </div>

  <div class="tbar row2">
    <div class="group">
      <span class="grip"></span>
      <svg class="ic"><use href="#pt"/></svg><span class="dd"></span>
      <svg class="ic m2"><use href="#line"/></svg>
      <svg class="ic m2"><use href="#bari"/></svg><span class="dd"></span>
      <svg class="ic"><use href="#poly"/></svg><span class="dd n"></span>
      <span class="sep"></span>
      <svg class="ic"><use href="#supg"/></svg>
      <svg class="ic"><use href="#sup2"/></svg>
      <svg class="ic"><use href="#surg"/></svg>
      <span class="sep"></span>
      <svg class="ic"><use href="#dimx"/></svg><span class="dd"></span>
      <svg class="ic"><use href="#xxl"/></svg>
      <svg class="ic"><use href="#dash"/></svg>
      <span class="sep"></span>
      <svg class="ic"><use href="#rblu"/></svg><span class="dd"></span>
      <svg class="ic"><use href="#rred"/></svg><span class="dd"></span>
      <svg class="ic"><use href="#cuar"/></svg><span class="dd n"></span>
      <svg class="ic"><use href="#cubl"/></svg>
      <svg class="ic m2"><use href="#cubs"/></svg><span class="dd"></span>
      <span class="sep"></span>
      <svg class="ic"><use href="#flow"/></svg><span class="dd n"></span>
      <svg class="ic"><use href="#dred"/></svg>
      <svg class="ic"><use href="#frm"/></svg>
      <svg class="ic"><use href="#frm"/></svg>
      <svg class="ic"><use href="#film"/></svg>
      <svg class="ic"><use href="#bhand"/></svg><span class="dd"></span>
    </div>
    <div class="group">
      <span class="grip"></span>
      <svg class="ic m2"><use href="#gskel"/></svg>
      <svg class="ic"><use href="#zred"/></svg>
      <svg class="ic"><use href="#zx"/></svg>
      <svg class="ic"><use href="#wire"/></svg>
      <svg class="ic"><use href="#wcub"/></svg>
      <span class="sep"></span>
      <svg class="ic"><use href="#axx"/></svg>
      <svg class="ic"><use href="#axy"/></svg>
      <svg class="ic"><use href="#axz"/></svg>
      <svg class="ic m2"><use href="#axm"/></svg><span class="dd"></span>
      <svg class="ic"><use href="#micr"/></svg><span class="dd"></span>
      <span class="sep"></span>
      <svg class="ic"><use href="#shap"/></svg><span class="dd"></span>
    </div>
    <div class="group">
      <span class="grip"></span>
      <svg class="ic"><use href="#pf"/></svg>
      <svg class="ic"><use href="#chip"/></svg>
      <span class="sep"></span>
      <svg class="ic"><use href="#bgr"/></svg>
      <svg class="ic"><use href="#heat"/></svg>
      <svg class="ic"><use href="#chea"/></svg>
      <svg class="ic"><use href="#arws"/></svg>
      <svg class="ic"><use href="#elli"/></svg>
      <svg class="ic"><use href="#sq4"/></svg><span class="dd"></span>
      <svg class="ic"><use href="#bcur"/></svg>
      <svg class="ic"><use href="#tgrd"/></svg>
      <span class="sep"></span>
      <svg class="ic"><use href="#repo"/></svg>
      <svg class="ic m2"><use href="#penw"/></svg><span class="dd"></span>
      <svg class="ic"><use href="#rain"/></svg><span class="dd n"></span>
    </div>
  </div>

  <main class="workspace">
    <aside class="nav-strip">
      <div class="nav-tab">Navegador de projetos - Dados</div>
    </aside>

    <div class="content">
      <section class="viewport">
        <svg class="scene" viewBox="25 101 1894 692">
          <defs>
            <g id="sup">
              <rect x="-8.300" y="23" width="16.600" height="25" fill="#7cf57c" />
              <ellipse cx="0" cy="48" rx="8.300" ry="2" fill="#58e858" />
              <ellipse cx="0" cy="24" rx="8.300" ry="2.500" fill="#3ce83c" />
              <path d="M-20 21L30 20 18 31-30 28z" fill="#3de83d" />
              <path d="M2 7L30 20-20 21z" fill="#7ef07e" />
              <circle r="12.500" fill="#3cf03c" />
            </g>
          </defs>

          <!-- supports under the slab -->
          <use href="#sup" x="410" y="223" />
          <use href="#sup" x="619" y="233" />
          <use href="#sup" x="829" y="244" />
          <use href="#sup" x="1038" y="255" />
          <use href="#sup" x="1246" y="267" />
          <use href="#sup" x="1455" y="278" />
          <use href="#sup" x="281" y="238" />
          <use href="#sup" x="233" y="281" />
          <use href="#sup" x="1535" y="305" />
          <use href="#sup" x="1487" y="348" />
          <path d="M170 337L148 353" stroke="#3cf03c" stroke-width="24" stroke-linecap="round" />
          <path d="M1423 403L1403 420" stroke="#3cf03c" stroke-width="24" stroke-linecap="round" />
          <path d="M159 343L198 387 190 395 111 391z" fill="#3fe03f" />

          <!-- slab, see-through -->
          <path class="slab" d="M305 205L1560 273 1365 442 110 374z" />

          <!-- beam -->
          <path d="M178 344L1400 407 1387 420 166 353z" fill="#4b4ba6" />
          <path d="M166 353L1387 420 1413 425V478L159 414V385z" fill="#7c7cf5" />
          <path d="M166 353L1387 420 1395 452 159 385z" fill="#6d6de6" />
          <path d="M153 416L160 411 1407 474V484z" fill="#7c7cf5" />
          <path d="M163 412L1407 475V481L170 420z" fill="#4b4bab" />
          <path d="M1413 470L1420 469 1419 475 1413 477zM1403 482L1409 480 1408 485z" fill="#e03050" />
          <path d="M152 417L160 409V414z" fill="#a05070" />
          <path d="M785 379h3v5h-3zM785 439h3v4h-3z" fill="#b04070" opacity=".7" />

          <!-- front supports over the beam -->
          <path d="M166 353L198 387 190 395 152 393z" fill="#5c8f6c" opacity=".8" />
          <path d="M1413 413L1463 445 1372 450z" fill="#7cf07c" />
          <path d="M1380 440L1463 445 1443 462 1365 458z" fill="#3de83d" />
          <path d="M1383 457L1462 461" stroke="#6ef06e" stroke-width="4" />
          <path d="M1365 475L1443 480" stroke="#6ef06e" stroke-width="4" />

          <!-- edges and lines -->
          <g class="edge-green">
            <path d="M305 205L1560 273M305 205L208 289M1560 273L1462 357" />
          </g>
          <g class="edge-black">
            <path d="M159 332L1413 399M110 374L1365 442M208 289L110 374M1462 357L1365 442M932 239L738 407" />
            <path d="M159 332V378M1413 399V445" />
          </g>
          <g class="edge-cyan">
            <path d="M169 284L1423 352M149 301L1403 368M149 380L1403 447" />
            <path d="M169 284L149 301M149 301V380M1423 352V430M1403 368V447M1403 447L1423 430M794 318V392M777 335V413M794 318L777 335" />
          </g>

          <!-- nodes -->
          <g class="nodes">
            <rect x="303" y="203" width="4" height="4" />
            <rect x="1558" y="271" width="4" height="4" />
            <rect x="108" y="372" width="4" height="4" />
            <rect x="1363" y="440" width="4" height="4" />
            <rect x="930" y="237" width="4" height="4" />
            <rect x="736" y="405" width="4" height="4" />
            <rect x="206" y="287" width="4" height="4" />
            <rect x="157" y="330" width="4" height="4" />
            <rect x="1460" y="355" width="4" height="4" />
            <rect x="1411" y="397" width="4" height="4" />
          </g>

          <!-- labels -->
          <rect class="lab-box" x="519" y="306" width="13" height="14" />
          <text class="lab-s" x="525.500" y="317">S1</text>
          <rect class="lab-box" x="1147" y="339" width="14" height="14" />
          <text class="lab-s" x="1154" y="350">S2</text>
          <rect class="lab-box" x="382" y="385" width="18" height="14" />
          <text class="lab-m" x="391" y="396">M1</text>
          <rect class="lab-box" x="1009" y="419" width="18" height="14" />
          <text class="lab-m" x="1018" y="430">M2</text>
          <text class="lab-n" x="147" y="320">1</text>
          <rect class="lab-box" x="1394" y="375" width="11" height="15" />
          <text class="lab-n" x="1400" y="387">2</text>

          <!-- axes on the model -->
          <path d="M305 205L345 207" stroke="#e00000" stroke-width="2" />
          <path d="M335 203L345 207 335 210z" fill="#c01010" />
          <path d="M305 205V238" stroke="#0000c8" stroke-width="2" />
          <path d="M301 235h8L305 246z" fill="#000090" />
          <path d="M305 205L296 214" stroke="#20c020" stroke-width="2" />
          <circle cx="297" cy="212" r="3" fill="#18a018" />
          <text class="ax ax-x" x="354" y="212">X</text>
          <text class="ax ax-z" x="305" y="258">Z</text>
          <text class="ax ax-y" x="292" y="219">Y</text>

          <!-- axes in the corner -->
          <path d="M80 682L118 684" stroke="#e00000" stroke-width="2" />
          <path d="M109 681L118 684 109 687z" fill="#c01010" />
          <path d="M80 682V716" stroke="#0000e0" stroke-width="2" />
          <path d="M76 712h8L80 722z" fill="#000090" />
          <path d="M80 682L71 690" stroke="#20d020" stroke-width="2" />
          <circle cx="72" cy="689" r="2.500" fill="#108010" />
          <text class="ax ax-x" x="129" y="689">X</text>
          <text class="ax ax-z" x="80" y="735">Z</text>
          <text class="ax ax-y" x="68" y="696">Y</text>
        </svg>
      </section>

      <section class="panel">
        <div class="panel-head">
          <span>1.7 Apoios nodais</span>
          <div class="panel-buttons">
            <svg viewBox="0 0 10 10"><path d="M3 1h4M4 1v4M6 1v4M2 5h6M5 5v4" stroke="#666" fill="none" /></svg>
            <svg viewBox="0 0 10 10"><path d="M1 1l8 8M9 1L1 9" stroke="#666" /></svg>
          </div>
        </div>

        <div class="panel-tools">
          <svg class="ic sm on"><use href="#ttri"/></svg>
          <svg class="ic sm"><use href="#tpl"/></svg>
          <svg class="ic sm"><use href="#tdn"/></svg>
          <svg class="ic sm"><use href="#tch"/></svg>
          <svg class="ic sm"><use href="#twav"/></svg>
          <span class="sep"></span>
          <svg class="ic sm"><use href="#tl"/></svg>
          <svg class="ic sm"><use href="#tr"/></svg>
          <span class="sep"></span>
          <svg class="ic sm"><use href="#cu1"/></svg>
          <svg class="ic sm on m2"><use href="#cu2"/></svg>
          <svg class="ic sm"><use href="#circ"/></svg>
          <span class="sep"></span>
          <svg class="ic sm"><use href="#ppl"/></svg>
          <svg class="ic sm"><use href="#pxx"/></svg>
          <svg class="ic sm"><use href="#pdo"/></svg>
          <span class="sep"></span>
          <svg class="ic sm"><use href="#pxg"/></svg>
          <span class="sep"></span>
          <svg class="ic sm"><use href="#rowx"/></svg>
          <svg class="ic sm"><use href="#rowl"/></svg>
          <svg class="ic sm"><use href="#rowr"/></svg>
          <span class="sep"></span>
          <svg class="ic sm"><use href="#tyel"/></svg>
          <svg class="ic sm"><use href="#tblu"/></svg>
          <span class="sep"></span>
          <svg class="ic sm"><use href="#tpen"/></svg>
          <span class="sep"></span>
          <svg class="ic sm"><use href="#htab"/></svg>
          <svg class="ic sm"><use href="#wren"/></svg>
          <svg class="ic sm"><use href="#xls"/></svg>
          <svg class="ic sm"><use href="#calc"/></svg>
          <span class="sep"></span>
          <svg class="ic sm"><use href="#abe"/></svg>
          <svg class="ic sm"><use href="#fx"/></svg>
          <svg class="ic sm"><use href="#fxx"/></svg>
        </div>

        <div class="grid-wrap">
          <table class="grid">
            <colgroup>
              <col class="c-no"><col class="c-a"><col class="c-b"><col class="c-c"><col class="c-d"><col class="c-e">
              <col class="c-f"><col class="c-g"><col class="c-h"><col class="c-i"><col>
            </colgroup>
            <thead>
              <tr class="letters">
                <th class="corner" rowspan="3">Apoio<br>nº</th>
                <th class="sel">A</th><th>B</th><th>C</th><th>D</th><th>E</th><th>F</th><th>G</th><th>H</th><th>I</th><th>J</th>
              </tr>
              <tr class="h1">
                <th class="low" rowspan="2">Nos nós nº</th>
                <th class="low tight" rowspan="2">Sistema de eixos</th>
                <th class="nob">Pilar</th>
                <th class="nob" colspan="3">Apoio ou mola [kN/m]</th>
                <th class="nob" colspan="3">Restrição à rotação ou mola [kNm/rad]</th>
                <th class="low" rowspan="2">Comentário</th>
              </tr>
              <tr class="h2">
                <th class="not">em Z</th>
                <th class="not sub">u<small>X</small></th><th class="not sub">u<small>Y</small></th><th class="not sub">u<small>Z</small></th>
                <th class="not sub">φ<small>X</small></th><th class="not sub">φ<small>Y</small></th><th class="not sub">φ<small>Z</small></th>
              </tr>
            </thead>
            <tbody>
              <tr>
                <th class="rn sel">1</th>
                <td class="edit"><span>5</span><svg class="cell-btn" viewBox="0 0 10 12"><path d="M2 1l6 6H5l2 4-1.500 1-2-4L2 10z" fill="#fff" stroke="#6a7488"/></svg></td>
                <td>Global X,Y,Z</td>
                <td class="ck"><svg><use href="#ckoff"/></svg></td>
                <td class="ck"><svg><use href="#ckon"/></svg></td>
                <td class="ck"><svg><use href="#ckon"/></svg></td>
                <td class="ck"><svg><use href="#ckon"/></svg></td>
                <td class="ck"><svg><use href="#ckon"/></svg></td>
                <td class="ck"><svg><use href="#ckoff"/></svg></td>
                <td class="ck"><svg><use href="#ckon"/></svg></td>
                <td></td>
              </tr>
              <tr>
                <th class="rn">2</th>
                <td>10</td>
                <td>Global X,Y,Z</td>
                <td class="ck"><svg><use href="#ckoff"/></svg></td>
                <td class="ck"><svg><use href="#ckoff"/></svg></td>
                <td class="ck"><svg><use href="#ckon"/></svg></td>
                <td class="ck"><svg><use href="#ckon"/></svg></td>
                <td class="ck"><svg><use href="#ckon"/></svg></td>
                <td class="ck"><svg><use href="#ckoff"/></svg></td>
                <td class="ck"><svg><use href="#ckon"/></svg></td>
                <td></td>
              </tr>
              <tr><th class="rn">3</th><td></td><td></td><td></td><td></td><td></td><td></td><td></td><td></td><td></td><td class="off"></td></tr>
              <tr><th class="rn">4</th><td></td><td></td><td></td><td></td><td></td><td></td><td></td><td></td><td></td><td class="off"></td></tr>
              <tr><th class="rn">5</th><td></td><td></td><td></td><td></td><td></td><td></td><td></td><td></td><td></td><td class="off"></td></tr>
            </tbody>
          </table>
          <div class="vscroll">
            <svg viewBox="0 0 10 8"><path d="M2 6l3-4 3 4" fill="none" stroke="#555" stroke-width="1.500"/></svg>
            <div class="vthumb"></div>
            <svg viewBox="0 0 10 8"><path d="M2 2l3 4 3-4" fill="none" stroke="#555" stroke-width="1.500"/></svg>
          </div>
        </div>

        <div class="tabs">
          <span class="tab">Nós</span>
          <span class="tab">Linhas</span>
          <span class="tab">Materiais</span>
          <span class="tab">Superfícies</span>
          <span class="tab">Sólidos</span>
          <span class="tab">Aberturas</span>
          <span class="tab active">Apoios nodais</span>
          <span class="tab">Apoios em linha</span>
          <span class="tab">Apoios elásticos de superfícies</span>
          <span class="tab">Articulações de linha</span>
          <span class="tab">Secções</span>
          <span class="tab">Articulações de barras</span>
          <span class="tab">Excentricidades das barras</span>
          <span class="tab">Divisões de barras</span>
          <span class="tab">Barras</span>
          <span class="tab">Apoios elásticos de barras</span>
          <span class="tab">Não-linearidades de barras</span>
          <span class="tab">Conjuntos de barras</span>
          <span class="tab">Interseções</span>
          <span class="tab">Refinamento da malha de EF</span>
          <div class="tab-nav">
            <button class="off" type="button">|◂</button>
            <button class="off" type="button">◂</button>
            <button type="button">▸</button>
            <button type="button">▸|</button>
          </div>
        </div>

        <div class="hint">Lista de nós apoiados (p.ex. '1,3,5-7')</div>
      </section>
    </div>
  </main>

  <footer class="statusbar">
    <span class="sb-space"></span>
    <span class="sb-btn down b1">AJUSTAR</span>
    <span class="sb-btn b2">GRELHA</span>
    <span class="sb-btn down b3">CARTES</span>
    <span class="sb-btn b4">AJUST. OBJ.</span>
    <span class="sb-btn down b5">LINHAS AUX.</span>
    <span class="sb-btn down b6">DXF</span>
    <span class="sb-cell w1"></span>
    <span class="sb-cell w2"></span>
    <span class="sb-cell w3"></span>
    <span class="sb-cell w3"></span>
  </footer>
</body>

</html>
```

FILE: styles.css
```css
* {
  margin: 0;
  padding: 0;
  box-sizing: border-box;
}

body {
  width: 1919px;
  height: 1039px;
  display: flex;
  flex-direction: column;
  overflow: hidden;
  background: #d0d4dd;
  font-family: 'Liberation Sans', Arial, sans-serif;
  font-size: 11px;
  color: #222;
}

.defs {
  display: none;
}

/* title bar */
.titlebar {
  height: 23px;
  flex: none;
  display: flex;
  align-items: center;
  background: #fff;
  padding-left: 2px;
}

.app-icon {
  width: 16px;
  height: 16px;
}

.app-five {
  font: bold 10px 'Liberation Sans', sans-serif;
  fill: #f0d040;
}

.app-title {
  margin-left: 5px;
  font-family: 'Noto Sans', sans-serif;
  font-size: 11.300px;
  color: #111;
}

.win-buttons {
  margin-left: auto;
  display: flex;
  gap: 35px;
  padding-right: 19px;
}

.win-buttons svg {
  width: 10px;
  height: 10px;
}

/* menu */
.menubar {
  height: 24px;
  flex: none;
  display: flex;
  align-items: center;
  padding-left: 3px;
  background: #d0d4dd;
}

.menu-logo {
  width: 18px;
  height: 14px;
  margin-left: 3px;
}

.menu-items {
  display: flex;
  gap: 15px;
  margin-left: 10px;
  font-family: 'Noto Sans', sans-serif;
  font-size: 11px;
  color: #4a4e56;
}

.mdi-buttons {
  margin-left: auto;
  display: flex;
  gap: 6px;
  padding-right: 3px;
}

.mdi-buttons svg {
  width: 10px;
  height: 10px;
}

/* toolbars */
.tbar {
  flex: none;
  display: flex;
  background: #d0d4dd;
}

.row1 {
  height: 26px;
  padding-left: 4px;
}

.row2 {
  height: 27px;
  padding-left: 1px;
  border-bottom: 2px solid #8a8c92;
}

.group {
  display: flex;
  align-items: center;
  margin-right: 2px;
  border-radius: 0 4px 4px 0;
  background: linear-gradient(#f1f3f8, #e6e9f0 70%, #c6cad3);
}

.grip {
  width: 2px;
  height: 16px;
  margin: 0 2px 0 1px;
  flex: none;
  background: repeating-linear-gradient(#8a8e98 0 1px, transparent 1px 3px);
}

.grip.small {
  height: 12px;
  margin: 0;
}

.ic {
  width: 18px;
  height: 18px;
  margin: 0 2px;
  flex: none;
  overflow: visible;
}

.ic.on {
  background: linear-gradient(#fde7b8, #f8c878);
  box-shadow: 0 0 0 2px #f8d496, 0 0 0 3px #c8a878;
  border-radius: 1px;
}

.ic.m2 {
  margin-left: 4px;
}

.ic.m4 {
  margin-left: 6px;
}

.ic.sm {
  width: 16px;
  height: 16px;
  margin: 0 3px;
}

.ic.sm.m2 {
  margin-left: 5px;
}

.ict {
  font: bold 5.500px 'Liberation Sans', sans-serif;
}

.ici {
  font: bold 11px 'Liberation Serif', serif;
}

.ici2 {
  font: italic 9px 'Liberation Serif', serif;
}

.ics {
  font: 10px 'Liberation Serif', serif;
}

.icf {
  font: italic 14px 'Liberation Serif', serif;
}

.sep {
  width: 8px;
  height: 18px;
  flex: none;
  background: linear-gradient(#9a9ea8, #9a9ea8) center / 1px 100% no-repeat;
}

.dd {
  width: 14px;
  height: 10px;
  flex: none;
  background: linear-gradient(135deg, transparent 50%, #666 50%) 3px 3px / 3px 3px no-repeat,
    linear-gradient(225deg, transparent 50%, #666 50%) 6px 3px / 3px 3px no-repeat;
  transform: rotate(180deg);
}

.dd.n {
  width: 10px;
}

.combo {
  width: 215px;
  height: 20px;
  margin: 0 1px 0 2px;
  flex: none;
  display: flex;
  align-items: center;
  justify-content: space-between;
  padding: 0 5px 0 3px;
  background: #fff;
  border: 1px solid #eef0f4;
  font-family: 'Noto Sans', sans-serif;
  font-size: 11px;
  color: #111;
}

.combo-arrow {
  width: 0;
  height: 0;
  border: 3px solid transparent;
  border-top: 4px solid #666;
  margin-top: 4px;
}

/* main area */
.workspace {
  flex: 1;
  min-height: 0;
  display: flex;
}

.nav-strip {
  width: 24px;
  flex: none;
  padding-top: 3px;
}

.nav-tab {
  width: 20px;
  height: 199px;
  padding-top: 4px;
  writing-mode: vertical-rl;
  line-height: 20px;
  background: linear-gradient(90deg, #fff6dc, #ffd877);
  border: 1px solid #d8c48c;
  border-left: 0;
  font-family: 'Noto Sans', sans-serif;
  font-size: 11.500px;
  color: #555;
}

.content {
  flex: 1;
  min-width: 0;
  display: flex;
  flex-direction: column;
}

.viewport {
  height: 693px;
  flex: none;
  background: #fff;
  border-left: 1px solid #6a6c72;
  margin-bottom: 5px;
}

.scene {
  display: block;
  width: 1894px;
  height: 692px;
}

.slab {
  fill: #7a7a7a;
  opacity: .8;
}

.edge-green {
  fill: none;
  stroke: #22ee22;
  stroke-width: 1.300;
}

.edge-black {
  fill: none;
  stroke: #0a0a0a;
  stroke-width: 1.200;
}

.edge-cyan {
  fill: none;
  stroke: #1cf0f0;
  stroke-width: 1.200;
}

.nodes {
  fill: #8c0808;
}

.lab-box {
  fill: #fff;
}

.scene text {
  text-anchor: middle;
  font-family: 'Liberation Sans', sans-serif;
}

.lab-s {
  font-size: 10px;
  fill: #a0a0a0;
}

.lab-m {
  font-size: 11px;
  font-weight: bold;
  fill: #0000c8;
}

.lab-n {
  font-size: 11px;
  font-weight: bold;
  fill: #0a700a;
}

.ax {
  font-size: 11px;
}

.ax-x {
  fill: #e01010;
}

.ax-y {
  fill: #30d030;
}

.ax-z {
  fill: #0000e0;
}

/* table panel */
.panel {
  flex: 1;
  min-height: 0;
  display: flex;
  flex-direction: column;
  background: #f0f0f0;
}

.panel-head {
  height: 20px;
  flex: none;
  display: flex;
  align-items: center;
  justify-content: space-between;
  padding: 0 3px 0 4px;
  background: #e8ecf5;
  font-family: 'Noto Sans', sans-serif;
  font-size: 11px;
  color: #555;
}

.panel-buttons {
  display: flex;
  gap: 7px;
}

.panel-buttons svg {
  width: 10px;
  height: 10px;
}

.panel-tools {
  height: 25px;
  flex: none;
  display: flex;
  align-items: center;
  padding-left: 8px;
  background: linear-gradient(#e8ecf5 25%, #c6cad3);
  border-bottom: 1px solid #555;
}

.grid-wrap {
  height: 140px;
  flex: none;
  display: flex;
  padding: 3px 2px 0 2px;
  background: #f0f0f0;
}

.grid {
  width: 1875px;
  height: 127px;
  flex: none;
  table-layout: fixed;
  border-collapse: collapse;
  border: 1px solid #666;
  background: #fff;
  font-size: 11px;
}

.c-no { width: 46px; }
.c-a { width: 161px; }
.c-b { width: 114px; }
.c-c { width: 60px; }
.c-d { width: 73px; }
.c-e { width: 71px; }
.c-f { width: 72px; }
.c-g { width: 72px; }
.c-h { width: 73px; }
.c-i { width: 72px; }

.grid th,
.grid td {
  border: 1px solid #a0a0a0;
  overflow: hidden;
  white-space: nowrap;
}

.grid th {
  background: #f0f0f0;
  font-weight: normal;
  color: #222;
}

.grid td {
  padding: 0 3px;
  height: 16px;
  background: #fff;
}

.grid td.off {
  background: #f0f0f0;
}

.letters th {
  height: 13px;
  line-height: 12px;
  font-size: 12px;
  background: #e2e2e2;
  border-bottom: 2px solid #888;
  border-right: 2px solid #999;
}

.letters th.corner {
  padding-top: 10px;
  background: #f0f0f0;
  font-size: 11px;
  line-height: 15px;
  border-bottom-color: #a0a0a0;
  border-right-color: #a0a0a0;
}

.grid .sel {
  background: #3399ff;
  color: #fff;
}

.h1 th {
  height: 16px;
  letter-spacing: -.07px;
}

.h2 th {
  height: 17px;
}

.grid th.low {
  vertical-align: bottom;
  padding-bottom: 3px;
}

.grid th.tight {
  letter-spacing: -.3px;
}

.grid th.nob {
  border-bottom: 0;
}

.grid th.not {
  border-top: 0;
}

.sub {
  font-size: 10px;
  letter-spacing: 1px;
}

.sub small {
  font-size: 9px;
}

.grid th.rn {
  height: 16px;
  background: #e2e2e2;
  font-size: 12px;
  border-right: 2px solid #888;
  border-bottom: 2px solid #a8a8a8;
}

.grid th.rn.sel {
  background: #3399ff;
  color: #fff;
}

.grid td.edit {
  outline: 2px solid #000;
  outline-offset: -2px;
  padding-right: 2px;
}

.edit {
  position: relative;
}

.cell-btn {
  position: absolute;
  right: 3px;
  top: 2px;
  width: 10px;
  height: 12px;
}

.grid td.ck {
  padding: 0;
  text-align: center;
}

.ck svg {
  display: block;
  width: 12px;
  height: 12px;
  margin: 0 auto;
}

.vscroll {
  width: 17px;
  height: 127px;
  margin-left: 1px;
  flex: none;
  display: flex;
  flex-direction: column;
  align-items: center;
}

.vscroll svg {
  width: 10px;
  height: 15px;
  flex: none;
}

.vthumb {
  flex: 1;
  width: 15px;
  background: #cdcdcd;
}

/* sheet tabs */
.tabs {
  height: 17px;
  flex: none;
  display: flex;
  padding-left: 1px;
  background: #f0f0f0;
  border-top: 1px solid #777;
  border-bottom: 1px solid #d4d4d4;
}

.tab {
  padding: 0 3px;
  line-height: 15px;
  letter-spacing: -.04px;
  white-space: nowrap;
  border-right: 1px solid #666;
  border-bottom: 1px solid #8a8a8a;
  border-radius: 0 0 4px 4px;
}

.tab.active {
  margin-top: -2px;
  padding: 0 4px;
  line-height: 17px;
  background: #fbfbfb;
  border-left: 1px solid #666;
  border-right: 1px solid #444;
}

.tab-nav {
  margin-left: auto;
  display: flex;
  gap: 1px;
  padding: 1px 0 0;
}

.tab-nav button {
  width: 15px;
  height: 14px;
  border: 0;
  border-right: 1px solid #888;
  border-bottom: 1px solid #888;
  background: #f0f0f0;
  font-size: 10px;
  line-height: 12px;
  color: #000;
}

.tab-nav button.off {
  color: #aaa;
  border-color: #bbb;
}

.hint {
  height: 19px;
  flex: none;
  padding-left: 1px;
  line-height: 20px;
  background: #f0f0f0;
}

/* status bar */
.statusbar {
  height: 20px;
  flex: none;
  display: flex;
  background: linear-gradient(#d4d7de, #b4b8c2 35%, #aeb2bc 60%, #c6cad2);
  border-top: 1px solid #9a9a9a;
  font-size: 11px;
  color: #333;
}

.sb-space {
  width: 1092px;
}

.sb-btn {
  line-height: 18px;
  padding-left: 1px;
  white-space: nowrap;
  overflow: hidden;
  border-left: 1px solid #eef0f4;
  border-right: 1px solid #eef0f4;
  background: linear-gradient(#d8dbe2, #c4c8d0);
}

.sb-btn.down {
  border-top: 1px solid #222;
  border-left: 1px solid #222;
  border-right: 1px solid #e8eaf0;
  background: linear-gradient(#b8bcc6, #ccd0d8);
  line-height: 19px;
}

.b1 { width: 53px; }
.b2 { width: 52px; line-height: 14px; }
.b3 { width: 51px; }
.b4 { width: 70px; line-height: 14px; }
.b5 { width: 73px; }
.b6 { width: 29px; }

.sb-cell {
  border-right: 1px solid #989ca6;
}

.w1 { width: 191px; }
.w2 { width: 88px; }
.w3 { width: 74px; }
```
